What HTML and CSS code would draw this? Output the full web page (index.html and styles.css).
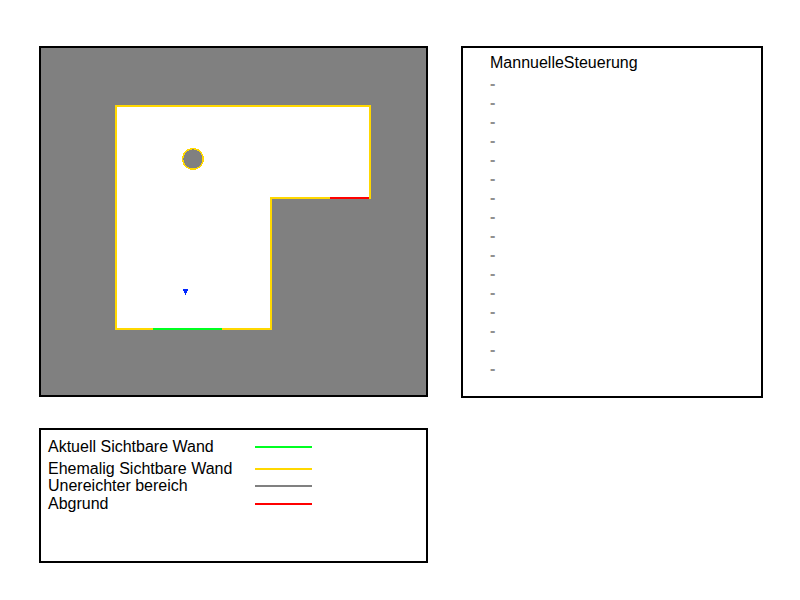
FILE: index.html
```html
<!DOCTYPE html>
<html lang="de">
<head>
<meta charset="utf-8">
<title>Steuerung</title>
<link rel="stylesheet" href="styles.css">
</head>
<body>
<main class="layout">
  <div class="left">
    <section class="panel map" aria-label="Karte">
      <svg class="plan" viewBox="0 0 385 347" shape-rendering="crispEdges">
        <path class="room" d="M75 58H329V150H230V281H75Z"/>
        <path class="visible" d="M112 281H181"/>
        <path class="cliff" d="M289 150H328"/>
        <circle class="pillar" cx="152" cy="111" r="10.3"/>
        <path class="robot" d="M142 241h5v2h-1v2h-1v2h-1v-2h-1v-2h-1z"/>
      </svg>
    </section>
    <section class="panel legend" aria-label="Legende">
      <ul class="entries">
        <li class="entry"><span>Aktuell Sichtbare Wand</span><i class="swatch green"></i></li>
        <li class="entry"><span>Ehemalig Sichtbare Wand</span><i class="swatch yellow"></i></li>
        <li class="entry"><span>Unereichter bereich</span><i class="swatch gray"></i></li>
        <li class="entry"><span>Abgrund</span><i class="swatch red"></i></li>
      </ul>
    </section>
  </div>
  <section class="panel control">
    <h1 class="title">MannuelleSteuerung</h1>
    <ul class="commands">
      <li>-</li><li>-</li><li>-</li><li>-</li>
      <li>-</li><li>-</li><li>-</li><li>-</li>
      <li>-</li><li>-</li><li>-</li><li>-</li>
      <li>-</li><li>-</li><li>-</li><li>-</li>
    </ul>
  </section>
</main>
</body>
</html>
```

FILE: styles.css
```css
* {
  box-sizing: border-box;
}

body {
  margin: 0;
  background: #fff;
  color: #000;
  font: 16px/19px "Liberation Sans", Arial, sans-serif;
}

.layout {
  display: grid;
  grid-template-columns: 389fr 302fr;
  column-gap: 33px;
  align-items: start;
  padding: 46px 37px 37px 39px;
}

.left {
  display: grid;
  row-gap: 31px;
}

.panel {
  border: 2px solid #000;
}

.map {
  background: #808080;
}

.plan {
  display: block;
  width: 100%;
  height: auto;
}

.room {
  fill: #fff;
  stroke: #ffd800;
  stroke-width: 2;
}

.visible {
  stroke: #00ff21;
  stroke-width: 2;
}

.cliff {
  stroke: #f00;
  stroke-width: 2;
}

.pillar {
  fill: #808080;
  stroke: #ffd800;
  stroke-width: 1.4;
}

.robot {
  fill: #0026ff;
}

.legend {
  min-height: 135px;
  padding: 7px;
}

.entries,
.commands {
  margin: 0;
  padding: 0;
  list-style: none;
}

.entries {
  display: grid;
  grid-template-rows: 22px 17px 18px 18px;
}

.entry {
  display: grid;
  grid-template-columns: 207px 57px;
  align-items: start;
}

.swatch {
  height: 2px;
  margin-top: 9px;
}

.green {
  background: #00ff21;
}

.yellow {
  background: #ffd800;
}

.gray {
  background: #808080;
}

.red {
  background: #f00;
}

.control {
  min-height: 352px;
  padding: 5px 27px;
}

.title {
  margin: 0 0 2px;
  font: inherit;
}

.commands {
  color: #909090;
  font-weight: bold;
}
```
